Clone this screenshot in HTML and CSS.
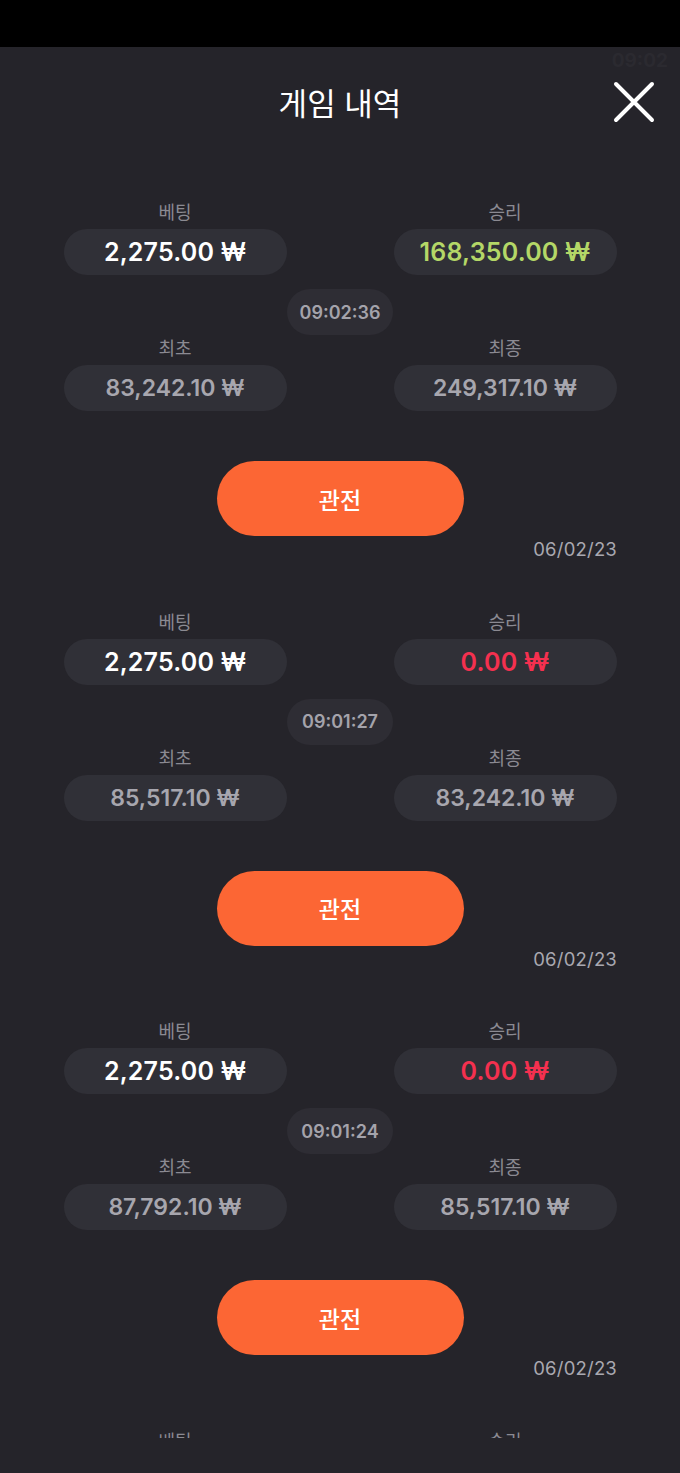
FILE: index.html
```html
<!DOCTYPE html>
<html lang="ko">
<head>
<meta charset="utf-8">
<title>게임 내역</title>
<link rel="stylesheet" href="styles.css">
</head>
<body>
<div class="statusbar"></div>
<header class="header">
  <span class="ghost-time">09:02</span>
  <h1 class="title">게임 내역</h1>
  <button class="close" aria-label="닫기">
    <svg width="44" height="44" viewBox="0 0 44 44"><path d="M4 4 L40 40 M40 4 L4 40" stroke="#fff" stroke-width="4" stroke-linecap="round" fill="none"/></svg>
  </button>
</header>
<main class="list">
  <section class="card">
    <div class="row">
      <div class="cell"><div class="label">베팅</div><div class="pill bet">2,275.00 ₩</div></div>
      <div class="cell"><div class="label">승리</div><div class="pill win">168,350.00 ₩</div></div>
    </div>
    <div class="time">09:02:36</div>
    <div class="row">
      <div class="cell"><div class="label">최초</div><div class="pill muted">83,242.10 ₩</div></div>
      <div class="cell"><div class="label">최종</div><div class="pill muted">249,317.10 ₩</div></div>
    </div>
    <button class="watch">관전</button>
    <div class="date">06/02/23</div>
  </section>
  <section class="card">
    <div class="row">
      <div class="cell"><div class="label">베팅</div><div class="pill bet">2,275.00 ₩</div></div>
      <div class="cell"><div class="label">승리</div><div class="pill lose">0.00 ₩</div></div>
    </div>
    <div class="time">09:01:27</div>
    <div class="row">
      <div class="cell"><div class="label">최초</div><div class="pill muted">85,517.10 ₩</div></div>
      <div class="cell"><div class="label">최종</div><div class="pill muted">83,242.10 ₩</div></div>
    </div>
    <button class="watch">관전</button>
    <div class="date">06/02/23</div>
  </section>
  <section class="card">
    <div class="row">
      <div class="cell"><div class="label">베팅</div><div class="pill bet">2,275.00 ₩</div></div>
      <div class="cell"><div class="label">승리</div><div class="pill lose">0.00 ₩</div></div>
    </div>
    <div class="time">09:01:24</div>
    <div class="row">
      <div class="cell"><div class="label">최초</div><div class="pill muted">87,792.10 ₩</div></div>
      <div class="cell"><div class="label">최종</div><div class="pill muted">85,517.10 ₩</div></div>
    </div>
    <button class="watch">관전</button>
    <div class="date">06/02/23</div>
  </section>
  <section class="card">
    <div class="row">
      <div class="cell"><div class="label">베팅</div><div class="pill bet">2,275.00 ₩</div></div>
      <div class="cell"><div class="label">승리</div><div class="pill lose">0.00 ₩</div></div>
    </div>
  </section>
</main>
</body>
</html>
```
FILE: styles.css
```css
* { box-sizing: border-box; }
html, body {
  margin: 0;
  padding: 0;
}
body {
  width: 680px;
  height: 1473px;
  overflow: hidden;
  background: #25242a;
  font-family: "Noto Sans CJK KR", "Noto Sans", sans-serif;
  color: #fff;
}
.statusbar {
  height: 47px;
  background: #000;
}
.header {
  position: relative;
  height: 110px;
  display: flex;
  align-items: center;
  justify-content: center;
}
.ghost-time {
  position: absolute;
  right: 12px;
  top: 2px;
  font-family: "Inter", sans-serif;
  font-weight: 700;
  font-size: 19px;
  color: #2b2a30;
}
.title {
  margin: 0;
  font-size: 31px;
  font-weight: 400;
  line-height: 40px;
  color: #fff;
}
.close {
  position: absolute;
  right: 24px;
  top: 33px;
  width: 44px;
  height: 44px;
  padding: 0;
  border: 0;
  background: transparent;
  display: flex;
}
.list {
  height: 1281px;
  overflow: hidden;
  padding-top: 42px;
  display: flex;
  flex-direction: column;
  gap: 49.5px;
}
.card {
  display: flex;
  flex-direction: column;
  align-items: center;
  flex-shrink: 0;
}
.row {
  display: grid;
  grid-template-columns: 223px 223px;
  column-gap: 107px;
  width: 553px;
}
.cell {
  display: flex;
  flex-direction: column;
  align-items: center;
  gap: 6px;
}
.label {
  font-size: 18px;
  line-height: 24px;
  color: #8b8a92;
}
.pill {
  width: 223px;
  height: 46px;
  border-radius: 23px;
  background: #303037;
  display: flex;
  align-items: center;
  justify-content: center;
  font-family: "Inter", sans-serif;
  font-size: 25px;
  font-weight: 600;
  letter-spacing: 0.2px;
}
.pill.bet { color: #ffffff; }
.pill.win { color: #b4d767; }
.pill.lose { color: #f4304f; }
.pill.muted {
  color: #a7a6ae;
  font-size: 23px;
  letter-spacing: 0;
}
.time {
  margin-top: 14px;
  width: 106px;
  height: 46px;
  border-radius: 23px;
  background: #2e2d34;
  display: flex;
  align-items: center;
  justify-content: center;
  font-family: "Inter", sans-serif;
  font-size: 18px;
  font-weight: 600;
  color: #a4a3ab;
}
.watch {
  margin-top: 50px;
  width: 247px;
  height: 75px;
  border: 0;
  border-radius: 38px;
  background: #fc6634;
  color: #fff;
  font-family: "Noto Sans CJK KR", sans-serif;
  font-size: 23px;
  font-weight: 500;
  padding: 0;
}
.date {
  align-self: stretch;
  margin-top: 3px;
  padding-right: 63px;
  text-align: right;
  font-family: "Inter", sans-serif;
  font-size: 18.5px;
  line-height: 20px;
  letter-spacing: 0.2px;
  color: #a9a8b0;
}
```
